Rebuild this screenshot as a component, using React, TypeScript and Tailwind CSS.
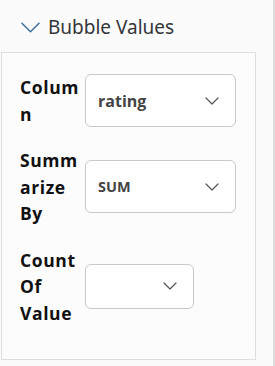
import React from 'react';

type Field = {
    label: string;
    value: string;
    width: string;
    height: string;
    upper?: boolean;
};

const FIELDS: Field[] = [
    { label: 'Column', value: 'rating', width: 'w-[151px]', height: 'h-[53px]' },
    { label: 'Summarize By', value: 'SUM', width: 'w-[151px]', height: 'h-[53px]', upper: true },
    { label: 'Count Of Value', value: '', width: 'w-[109px]', height: 'h-[45px]' },
];

function Chevron({ className }: { className?: string }) {
    return (
        <svg viewBox="0 0 14 8" className={className} fill="none">
            <path d="M1 1l6 6 6-6" stroke="currentColor" strokeWidth="1.2" strokeLinecap="round" strokeLinejoin="round" />
        </svg>
    );
}

function SelectBox({ field }: { field: Field }) {
    return (
        <div
            className={`${field.width} ${field.height} flex items-center justify-between rounded-[6px] border border-[#c9c9c9] bg-white pl-3 pr-4`}
        >
            <span
                className={`${
                    field.upper ? 'text-[14.5px]' : 'text-[16px]'
                } font-bold text-[#444] [font-family:'Open_Sans',sans-serif]`}
            >
                {field.value}
            </span>
            <Chevron className="w-[14px] h-[8px] text-[#555]" />
        </div>
    );
}

export default function App() {
    return (
        <div className="w-[275px] h-[366px] bg-[#fbfbfb] border-r-2 border-[#dcdcdc] pl-px overflow-hidden">
            <div className="flex items-center h-[52px] pl-5 pt-[2px]">
                <svg viewBox="0 0 20 11" className="w-[19px] h-[11px] text-[#41709b]" fill="none">
                    <path d="M1 1l9 9 9-9" stroke="currentColor" strokeWidth="1.6" strokeLinecap="round" strokeLinejoin="round" />
                </svg>
                <span className="ml-[8px] text-[19px] text-[#333639] [font-family:'Noto_Sans',sans-serif]">
                    Bubble Values
                </span>
            </div>

            <div className="w-[255px] h-[308px] border border-[#dedede] bg-[#fcfcfc] pl-[18px] pt-[21px] flex flex-col gap-5">
                {FIELDS.map((field) => (
                    <div key={field.label} className="flex items-center">
                        <div className="w-[63px] mr-[2px] break-words text-[17.5px] leading-[26.5px] font-bold tracking-[0.6px] text-[#111] [font-family:'Open_Sans',sans-serif]">
                            {field.label}
                        </div>
                        <SelectBox field={field} />
                    </div>
                ))}
            </div>
        </div>
    );
}
